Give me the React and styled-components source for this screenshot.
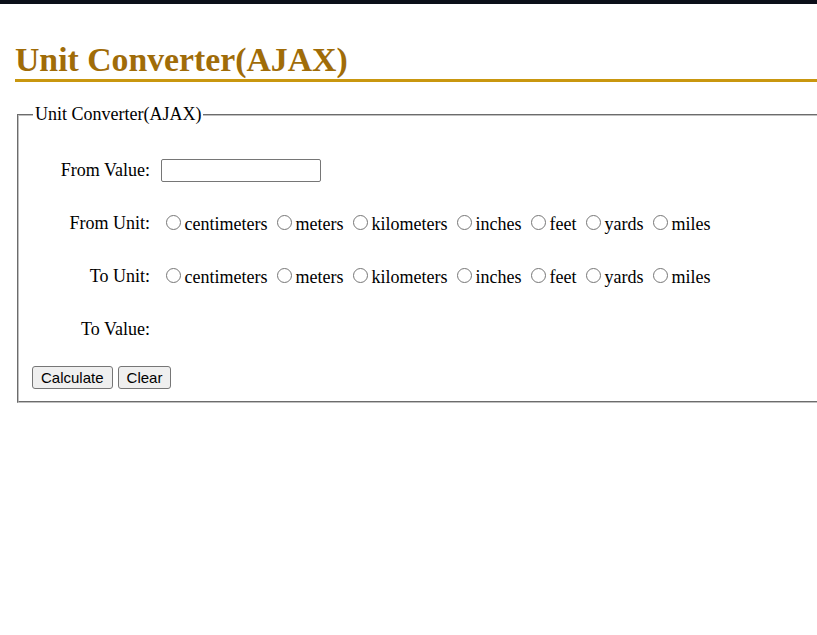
import React, { useState } from 'react';
import styled, { createGlobalStyle } from 'styled-components';

const GlobalStyle = createGlobalStyle`
  html, body {
    margin: 0;
    padding: 0;
    overflow: hidden;
    background: #fff;
  }
  body {
    font-family: "Liberation Serif", "Times New Roman", serif;
    font-size: 18px;
    color: #000;
  }
`;

const TopBar = styled.div`
  height: 4px;
  background: #0b0f19;
`;

const Page = styled.div`
  width: 1100px;
  padding-left: 15px;
`;

const Title = styled.h1`
  margin: 37px 0 0;
  padding-bottom: 0;
  font-size: 33.75px;
  line-height: 38px;
  font-weight: bold;
  color: #a06c08;
  border-bottom: 3px solid #c9970f;
`;

const Fieldset = styled.fieldset`
  margin: 22px 0 0 2px;
  padding: 19px 14px 12px 13px;
  border: 2px groove #c0c0c0;
  min-width: 0;
`;

const Legend = styled.legend`
  padding: 0 2px;
  margin-left: 1px;
  font-size: 18px;
`;

const Form = styled.div`
  display: grid;
  grid-template-columns: 118px auto;
  grid-auto-rows: 53px;
  column-gap: 11px;
  align-items: center;
`;

const Label = styled.div`
  text-align: right;
`;

const TextInput = styled.input`
  box-sizing: border-box;
  width: 160px;
  height: 23px;
  margin: 0;
  border: 1px solid #767676;
  border-radius: 2px;
  font-size: 15px;
`;

const Options = styled.div`
  white-space: nowrap;
`;

const Radio = styled.input`
  width: 15px;
  height: 15px;
  margin: 3px 3.5px 0 5px;
  accent-color: #767676;
`;

const Actions = styled.div`
  display: flex;
  gap: 5px;
  margin-top: 10px;
`;

const Button = styled.button`
  height: 23px;
  padding: 0 8px;
  margin: 0;
  font-family: "Liberation Sans", Arial, sans-serif;
  font-size: 15px;
  color: #000;
  background: #efefef;
  border: 1px solid #767676;
  border-radius: 3px;
`;

const UNITS = ['centimeters', 'meters', 'kilometers', 'inches', 'feet', 'yards', 'miles'];

const UnitOptions = ({ name }) => (
  <Options>
    {UNITS.map((u) => (
      <React.Fragment key={u}>
        <Radio type="radio" name={name} value={u} />
        {u}{' '}
      </React.Fragment>
    ))}
  </Options>
);

export default function App() {
  const [value, setValue] = useState('');

  return (
    <>
      <GlobalStyle />
      <TopBar />
      <Page>
        <Title>Unit Converter(AJAX)</Title>
        <Fieldset>
          <Legend>Unit Converter(AJAX)</Legend>
          <Form>
            <Label>From Value:</Label>
            <div>
              <TextInput value={value} onChange={(e) => setValue(e.target.value)} />
            </div>
            <Label>From Unit:</Label>
            <UnitOptions name="from" />
            <Label>To Unit:</Label>
            <UnitOptions name="to" />
            <Label>To Value:</Label>
            <div />
          </Form>
          <Actions>
            <Button type="button">Calculate</Button>
            <Button type="button" onClick={() => setValue('')}>Clear</Button>
          </Actions>
        </Fieldset>
      </Page>
    </>
  );
}
